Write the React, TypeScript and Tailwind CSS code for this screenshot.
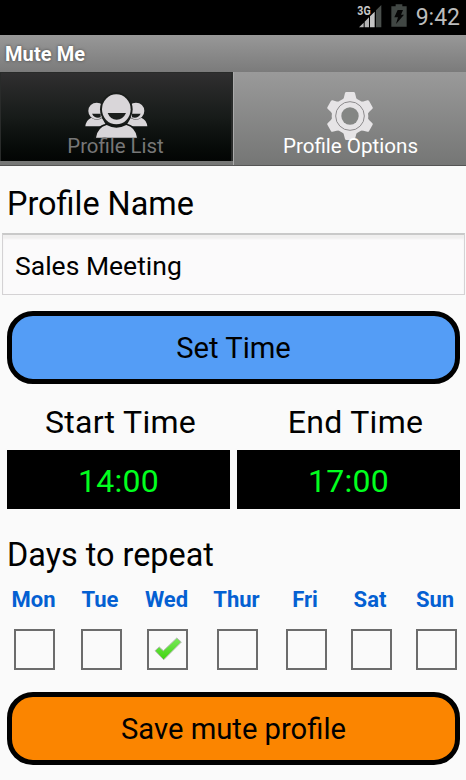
import clsx from "clsx";

const DAYS = [
  { label: "Mon", on: false },
  { label: "Tue", on: false },
  { label: "Wed", on: true },
  { label: "Thur", on: false },
  { label: "Fri", on: false },
  { label: "Sat", on: false },
  { label: "Sun", on: false },
];

const TOOTH_ANGLES = [0, 60, 120, 180, 240, 300];

function SignalIcon() {
  return (
    <svg width="25" height="25" viewBox="0 0 75 75">
      <path d="M6 70 L20 56 V70Z M23 70 V53 L36 40 V70Z" fill="#b5b5b5" />
      <path d="M39 70 V37 L53 23 V70Z" fill="#c4c4c4" />
      <path d="M57 70 V19 L73 3 V70Z" fill="#4a4f4c" />
      <text
        x="1"
        y="32"
        fontSize="40"
        fontWeight="700"
        fill="#c8c8c8"
        stroke="#000"
        strokeWidth="6"
        paintOrder="stroke"
        textLength="40"
        lengthAdjust="spacingAndGlyphs"
      >
        3G
      </text>
    </svg>
  );
}

function BatteryIcon() {
  return (
    <svg width="16" height="23" viewBox="0 0 48 69">
      <path d="M1 7H14V1H34V7H47V68H1Z" fill="#414744" />
      <path d="M20 18H36L30 32H39L15 60L21 40H10Z" fill="#050505" />
    </svg>
  );
}

function SidePerson() {
  return (
    <>
      <circle cx="290" cy="243" r="25" />
      <path d="M256 289 Q258 270 274 263 Q290 274 306 264 L320 289Z" />
      <path d="M276 251 H302 V262 Q284 267 276 251Z" fill="#1a1d1b" />
    </>
  );
}

function PeopleIcon() {
  return (
    <svg width="67" height="47" viewBox="249 186 201 141" fill="#d9d6d9">
      <SidePerson />
      <g transform="translate(698 0) scale(-1 1)">
        <SidePerson />
      </g>
      <ellipse cx="349" cy="238" rx="49" ry="51" fill="#1a1d1b" />
      <path d="M280 327 Q286 286 320 281 H378 Q412 286 418 327Z" fill="#131614" />
      <ellipse cx="349" cy="238" rx="43" ry="45" />
      <path d="M288 323 Q292 293 320 285 Q349 301 379 285 Q407 293 411 323Z" />
      <path d="M323 249 H378 Q369 269 350 269 Q331 269 323 249Z" fill="#1c1f1d" />
    </svg>
  );
}

function GearIcon() {
  return (
    <svg width="50" height="52" viewBox="300 90 150 156">
      <g fill="#e6e4e6">
        <circle cx="375" cy="168" r="55" />
        {TOOTH_ANGLES.map((a) => (
          <path
            key={a}
            d="M350 126 Q358 114 360 99 Q361 96 364 96 H386 Q389 96 390 99 Q392 114 400 126Z"
            transform={`rotate(${a} 375 168)`}
          />
        ))}
      </g>
      <circle cx="375" cy="168" r="43" fill="none" stroke="#8d8b8d" strokeWidth="3" />
      <circle cx="375" cy="168" r="26" fill="#848684" />
    </svg>
  );
}

function CheckMark() {
  return (
    <svg className="mb-px ml-[2px] shrink-0" width="29" height="24" viewBox="462 168 90 75">
      <defs>
        <linearGradient id="tick" x1="0" y1="0" x2="0" y2="1">
          <stop offset="0" stopColor="#79e85c" />
          <stop offset="1" stopColor="#3fd50e" />
        </linearGradient>
      </defs>
      <path
        d="M465 211 L478 199 L491 211 L533 171 L547 184 L492 239Z"
        fill="url(#tick)"
        stroke="#b4b8b2"
        strokeWidth="3"
        strokeLinejoin="round"
      />
    </svg>
  );
}

function BigButton({ label, className }: { label: string; className: string }) {
  return (
    <button
      className={clsx(
        "mr-[6px] ml-[7px] flex h-[73px] items-center justify-center rounded-[26px] border-[5px] border-black text-[29.2px]",
        className,
      )}
    >
      <span className="mt-[2px]">{label}</span>
    </button>
  );
}

function TimeBox({ label, value, className }: { label: string; value: string; className: string }) {
  return (
    <div className="flex-1">
      <div className={clsx("h-[51px] text-center text-[32px] leading-[47px] tracking-[0.3px]", className)}>{label}</div>
      <div className="h-[59px] bg-black text-center text-[32px] leading-[62px] tracking-[0.3px] text-[#00ff1e]">
        {value}
      </div>
    </div>
  );
}

export default function App() {
  return (
    <div className="flex h-[780px] w-[466px] flex-col overflow-hidden bg-[#fafafa] font-['Roboto',sans-serif] text-black">
      <header className="flex h-[35px] items-start justify-end bg-black pr-[6px]">
        <div className="mt-[4px] mr-[9px]">
          <SignalIcon />
        </div>
        <div className="mt-[4px] mr-[9px]">
          <BatteryIcon />
        </div>
        <span className="text-[23px] leading-[35px] text-[#bcbcbc]">9:42</span>
      </header>

      <div className="h-[37px] bg-linear-to-b from-[#989898] to-[#7b7b7b] pl-[5px] text-[20px] leading-[38px] font-bold tracking-[0.1px] text-white [text-shadow:0_0_3px_#444]">
        Mute Me
      </div>

      <nav className="flex h-[94px] border-b border-[#555] bg-linear-to-b from-[#9a9a9a] to-[#757675]">
        <div className="mb-[4px] flex w-[233px] flex-col items-center border-t border-r-2 border-l border-[#292b2a] bg-linear-to-b from-[#302f30] via-[#171b19] to-[#030504] pt-[19px]">
          <PeopleIcon />
          <span className="-mt-[5px] -ml-px text-[20.4px] leading-[24px] text-[#777]">Profile List</span>
        </div>
        <div className="flex flex-1 flex-col items-center border-l border-[#aaa] pt-[18px]">
          <GearIcon />
          <span className="-mt-[8px] ml-px text-[20.6px] leading-[24px] text-white">Profile Options</span>
        </div>
      </nav>

      <main className="flex flex-col">
        <h2 className="h-[67px] pt-[15px] pl-[7px] text-[32.4px] leading-[47px]">Profile Name</h2>
        <div className="ml-[2px] h-[62px] w-[463px] border border-t-2 border-[#d4d2d4] border-t-[#c9c9c9] bg-[#fbfafb] pl-[12px] text-[26.5px] leading-[61px] shadow-[inset_0_4px_2px_#f0efef]">
          Sales Meeting
        </div>

        <BigButton label="Set Time" className="mt-4 bg-[#549df6]" />

        <div className="mt-[15px] mr-[6px] ml-[7px] flex gap-[7px]">
          <TimeBox label="Start Time" value="14:00" className="pl-1" />
          <TimeBox label="End Time" value="17:00" className="pl-[14px]" />
        </div>

        <h2 className="mt-[23px] h-[50px] pl-[7px] text-[32.4px] leading-[46px]">Days to repeat</h2>
        <div className="grid grid-cols-[63px_70px_63px_77px_60px_70px_60px] pl-[3px]">
          {DAYS.map((day) => (
            <div key={day.label} className="flex flex-col items-center">
              <span className="-ml-[2px] h-[47px] text-[22px] leading-[36px] font-bold text-[#0460d2]">{day.label}</span>
              <div className="flex size-[41px] items-center justify-center border-2 border-[#6c6c6c]">
                {day.on && <CheckMark />}
              </div>
            </div>
          ))}
        </div>

        <BigButton label="Save mute profile" className="mt-[22px] bg-[#fb8500]" />
      </main>
    </div>
  );
}
